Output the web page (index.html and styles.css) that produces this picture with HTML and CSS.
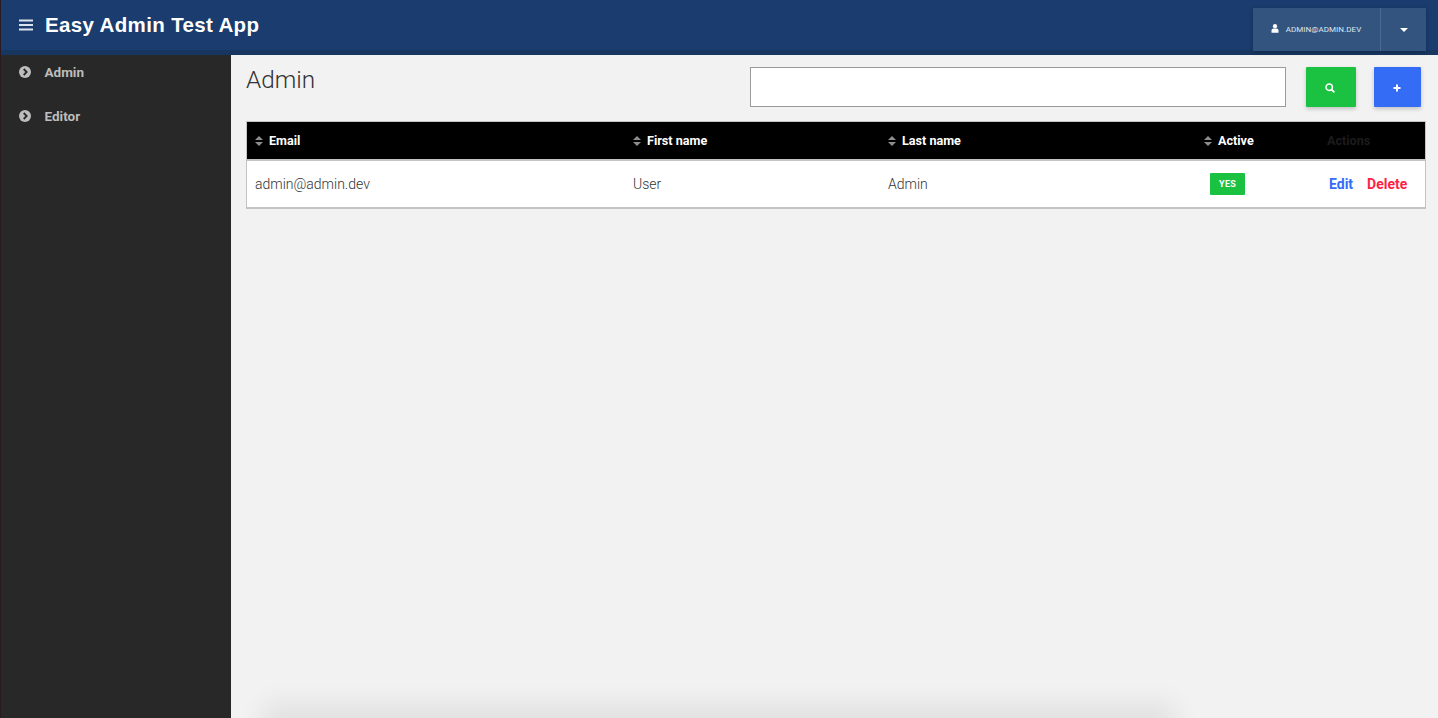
FILE: index.html
```html
<!DOCTYPE html>
<html lang="en">
<head>
<meta charset="utf-8">
<title>Easy Admin Test App</title>
<link rel="stylesheet" href="styles.css">
</head>
<body>
<div class="app">
  <header class="topbar">
    <button class="burger" aria-label="Menu">
      <svg width="14" height="12" viewBox="0 0 14 12"><path d="M0 0.500h14v2H0zM0 5h14v2H0zM0 9.500h14v2H0z" fill="#dce3ec"/></svg>
    </button>
    <h1 class="brand">Easy Admin Test App</h1>
    <div class="user">
      <div class="user-name">
        <svg class="user-icon" width="8" height="9" viewBox="0 0 8 9"><circle cx="4" cy="2.200" r="2.100" fill="#fff"/><path d="M0.500 8.800V6.500C0.500 5.200 1.500 4.500 2.500 4.500h3c1 0 2 .7 2 2v2.300z" fill="#fff"/></svg>
        <span>ADMIN@ADMIN.DEV</span>
      </div>
      <div class="user-caret"><span class="caret"></span></div>
    </div>
  </header>
  <div class="body">
    <nav class="sidebar">
      <a class="nav-item">
        <svg class="nav-icon" width="12" height="12" viewBox="0 0 12 12"><circle cx="6" cy="6" r="6" fill="#bdbdbd"/><path d="M4.700 3l3 3-3 3" fill="none" stroke="#282828" stroke-width="1.800"/></svg>
        <span>Admin</span>
      </a>
      <a class="nav-item">
        <svg class="nav-icon" width="12" height="12" viewBox="0 0 12 12"><circle cx="6" cy="6" r="6" fill="#bdbdbd"/><path d="M4.700 3l3 3-3 3" fill="none" stroke="#282828" stroke-width="1.800"/></svg>
        <span>Editor</span>
      </a>
    </nav>
    <main class="content">
      <div class="toolbar">
        <h2 class="title">Admin</h2>
        <input class="search" type="text" aria-label="Search">
        <button class="action action-search" aria-label="Search">
          <svg class="action-icon" width="10" height="10" viewBox="0 0 10 10"><circle cx="4.200" cy="4.200" r="3.200" fill="none" stroke="#fff" stroke-width="1.500"/><path d="M6.600 6.600L9.400 9.400" stroke="#fff" stroke-width="1.700"/></svg>
        </button>
        <button class="action action-add" aria-label="Add">
          <svg class="action-icon" width="8" height="8" viewBox="0 0 8 8"><path d="M3 0.500h2V3h2.500v2H5v2.500H3V5H0.500V3H3z" fill="#fff"/></svg>
        </button>
      </div>
      <table class="grid">
        <colgroup>
          <col class="col-email"><col class="col-first"><col class="col-last"><col class="col-active"><col class="col-actions">
        </colgroup>
        <thead>
          <tr>
            <th><span class="sort"></span>Email</th>
            <th><span class="sort"></span>First name</th>
            <th><span class="sort"></span>Last name</th>
            <th><span class="sort"></span>Active</th>
            <th class="th-actions">Actions</th>
          </tr>
        </thead>
        <tbody>
          <tr>
            <td>admin@admin.dev</td>
            <td>User</td>
            <td>Admin</td>
            <td><span class="badge">YES</span></td>
            <td class="row-actions"><a class="edit">Edit</a><a class="delete">Delete</a></td>
          </tr>
        </tbody>
      </table>
      <div class="page-shadow"></div>
    </main>
  </div>
</div>
</body>
</html>
```

FILE: styles.css
```css
* { box-sizing: border-box; }
html, body { margin: 0; height: 100%; overflow: hidden; }
body { font-family: Roboto, "Liberation Sans", sans-serif; background: #f2f2f2; color: #333; }
.app { height: 718px; display: flex; flex-direction: column; border-left: 1px solid #2a1a22; }
.topbar {
  height: 55px; flex: none; display: flex; align-items: flex-start;
  background: #1a3c6e; border-bottom: 5px solid #173660; padding-left: 18px; position: relative;
}
.burger { width: 14px; height: 12px; padding: 0; margin: 19px 12px 0 0; border: 0; background: none; display: flex; }
.brand { margin: 11px 0 0; font: 700 20.500px/28px "Liberation Sans", Arial, sans-serif; color: #fff; letter-spacing: 0.35px; }
.user {
  margin: 8px 12px 0 auto; height: 43px; display: flex; background: #32547f;
  box-shadow: 0 1px 4px rgba(0,0,0,.25); color: #dfe5ed;
}
.user-name { width: 128px; display: flex; align-items: center; justify-content: center; gap: 7px; font-size: 8px; letter-spacing: 0.05px; border-right: 1px solid #4b6a92; padding: 0 1px 1px 0; }
.user-icon { margin-top: -1px; }
.user-caret { width: 45px; display: flex; align-items: center; justify-content: center; }
.caret { width: 0; height: 0; border: 4px solid transparent; border-top: 4px solid #fff; border-bottom: 0; }
.body { flex: 1; display: flex; min-height: 0; }
.sidebar { width: 230px; flex: none; background: #282828; }
.nav-item { height: 44px; display: flex; align-items: center; padding: 0 0 10px 18px; gap: 13.500px; color: #bdbdbd; font-size: 13.500px; font-weight: 700; }
.nav-icon { flex: none; }
.content { flex: 1; padding: 0 12px 0 15px; position: relative; overflow: hidden; }
.toolbar { display: flex; align-items: flex-start; height: 66px; padding-top: 12px; }
.title { margin: 0; font-size: 24.300px; font-weight: 300; line-height: 26px; color: #333; flex: 1; }
.search { width: 536px; height: 40px; border: 1px solid #9a9a9a; background: #fff; margin-right: 20px; border-radius: 0; padding: 0; }
.action { height: 40px; border: 0; padding: 1px 2px 0 0; display: flex; align-items: center; justify-content: center; border-radius: 1px; box-shadow: 0 2px 4px rgba(0,0,0,.2); }
.action-search { width: 50px; background: #1bc241; margin-right: 18px; }
.action-add { width: 47px; background: #356cf6; margin-right: 5px; }
.grid { width: 1180px; border-collapse: separate; border-spacing: 0; table-layout: fixed; border: 1px solid #c4c4c4; border-bottom-width: 2px; background: #fff; font-size: 14px; }
.col-email { width: 378px; }
.col-first { width: 255px; }
.col-last { width: 316px; }
.col-active { width: 124px; }
.grid th { background: #000; color: #fff; font-size: 12.600px; font-weight: 700; text-align: left; padding: 0 0 0 8px; border-bottom: 2px solid #c4c4c4; height: 39px; white-space: nowrap; }
.grid th.th-actions { color: #1c1c1c; padding-left: 7px; }
.sort { display: inline-block; width: 8px; height: 10px; margin-right: 6px; position: relative; vertical-align: -1px; }
.sort::before, .sort::after { content: ""; position: absolute; left: 0; border-left: 4px solid transparent; border-right: 4px solid transparent; }
.sort::before { top: 0; border-bottom: 4px solid #8d8d8d; }
.sort::after { bottom: 0; border-top: 4px solid #8d8d8d; }
.grid td { height: 46px; padding: 0 0 0 8px; font-weight: 300; color: #333; white-space: nowrap; }
.badge { display: inline-block; width: 35px; height: 22px; margin-left: 6px; background: #1bc241; border-radius: 1px; color: #fff; font-size: 9px; font-weight: 700; line-height: 22px; text-align: center; letter-spacing: 0.2px; vertical-align: middle; }
.grid td.row-actions { font-weight: 700; padding-left: 9px; }
.edit { color: #356cf6; margin-right: 14px; }
.delete { color: #ff1f47; }
.page-shadow { position: absolute; left: 32px; width: 912px; top: 748px; height: 100px; box-shadow: 0 -100px 25px rgba(0,0,0,.07); }
```
